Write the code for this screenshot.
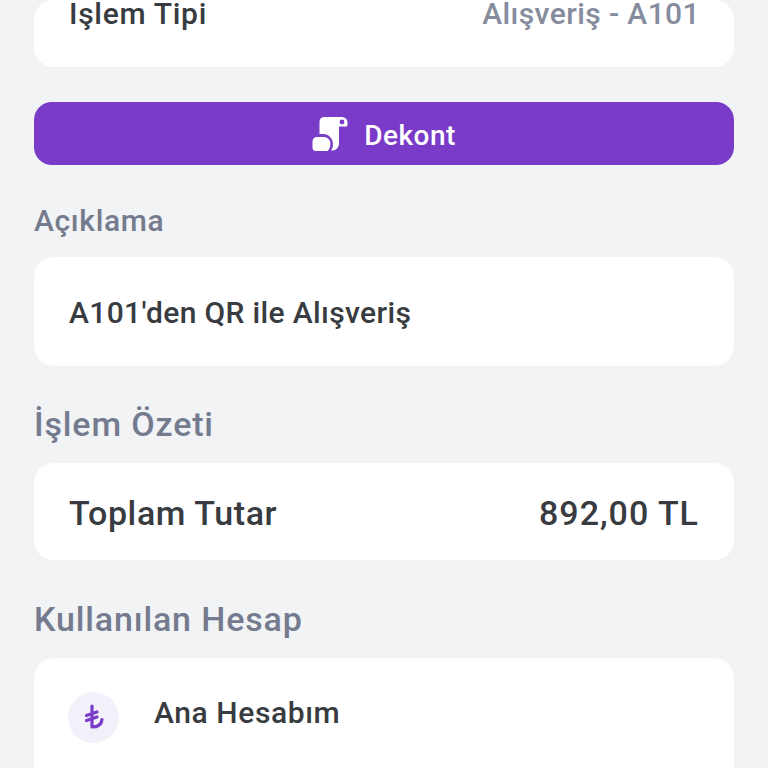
<script>
</script>

<div class="page">
  <section class="card top">
    <span class="label">Işlem Tipi</span>
    <span class="muted">Alışveriş - A101</span>
  </section>

  <button class="btn">
    <svg width="36" height="36" viewBox="0 0 36 36" aria-hidden="true">
      <path fill="#fff" d="M12 1h18a5.500 5.500 0 0 1 5.500 5.500V9a1.500 1.500 0 0 1-1.500 1.500h-7V28a6.500 6.500 0 0 1-6.500 6.500H19a8 8 0 0 0 2-6.500c0-5-4-10-10-10H7.500V6A5 5 0 0 1 12 1z"/>
      <circle cx="30" cy="6" r="2.400" fill="#7a3bc8"/>
      <path fill="#fff" d="M5 21h7a6.500 6.500 0 0 1 6.500 6.500c0 3-1 5.500-3 7.500H4a3.500 3.500 0 0 1-3.500-3.500V25.500A4.500 4.500 0 0 1 5 21z"/>
    </svg>
    <span>Dekont</span>
  </button>

  <h3 class="head small">Açıklama</h3>
  <section class="card desc">A101'den QR ile Alışveriş</section>

  <h3 class="head ozet">İşlem Özeti</h3>
  <section class="card sum">
    <span>Toplam Tutar</span>
    <span class="amount">892,00 TL</span>
  </section>

  <h3 class="head hesap">Kullanılan Hesap</h3>
  <section class="card account">
    <div class="circle">
      <svg width="20" height="26" viewBox="0 0 20 26" aria-hidden="true">
        <path fill="none" stroke="#7a3bc8" stroke-width="3.200" stroke-linecap="round" stroke-linejoin="round" d="M8 2V23c5.500 0 9.500-2.500 10-7.500M2.500 11.500l10.500-3.500M2.500 16.500l10.500-3.500"/>
      </svg>
    </div>
    <span class="name">Ana Hesabım</span>
  </section>
</div>

<style>
  :global(body) {
    margin: 0;
    background: #f1f3f5;
  }
  .page {
    height: 768px;
    overflow: hidden;
    box-sizing: border-box;
    padding: 0 34px;
    display: flex;
    flex-direction: column;
    font-family: Roboto, "Noto Sans", sans-serif;
    color: #383b40;
  }
  .card {
    flex: none;
    background: #fff;
    border-radius: 20px;
    box-sizing: border-box;
    padding: 0 35px;
    display: flex;
    align-items: center;
    justify-content: space-between;
  }
  .top {
    height: 67px;
    padding-bottom: 41px;
    font-size: 30px;
    font-weight: 500;
    letter-spacing: 0.7px;
  }
  .muted {
    color: #858c9d;
    letter-spacing: 0.4px;
    margin-right: -1px;
  }
  .btn {
    flex: none;
    margin-top: 35px;
    height: 63px;
    border: 0;
    border-radius: 18px;
    background: #7a3bc8;
    color: #fff;
    font: 500 28px Roboto, sans-serif;
    letter-spacing: 0.5px;
    display: flex;
    align-items: center;
    justify-content: center;
    gap: 16px;
    padding: 0;
  }
  .btn span {
    position: relative;
    top: 2px;
  }
  .head {
    margin: 0;
    flex: none;
    color: #757b8e;
    font-weight: 500;
    font-size: 34px;
    line-height: 38px;
    letter-spacing: 0.85px;
  }
  .head.small {
    font-size: 30px;
    letter-spacing: 0.65px;
    margin-top: 37px;
    margin-bottom: 17px;
  }
  .head.ozet {
    margin-top: 39px;
    margin-bottom: 20px;
  }
  .desc {
    height: 109px;
    font-size: 30px;
    font-weight: 500;
    letter-spacing: 0.35px;
    padding-top: 2px;
  }
  .sum {
    height: 97px;
    padding-top: 2px;
    font-size: 34px;
    font-weight: 500;
    letter-spacing: 0.6px;
  }
  .amount {
    letter-spacing: 1px;
  }
  .head.hesap {
    margin-top: 40px;
    margin-bottom: 20px;
  }
  .account {
    height: 130px;
    padding: 0 34px 12px;
    justify-content: flex-start;
    gap: 35px;
  }
  .circle {
    width: 51px;
    height: 51px;
    border-radius: 50%;
    background: #f2f1fa;
    display: flex;
    align-items: center;
    justify-content: center;
  }
  .name {
    font-size: 30px;
    font-weight: 500;
    letter-spacing: 0.6px;
    position: relative;
    top: -5px;
  }
</style>
